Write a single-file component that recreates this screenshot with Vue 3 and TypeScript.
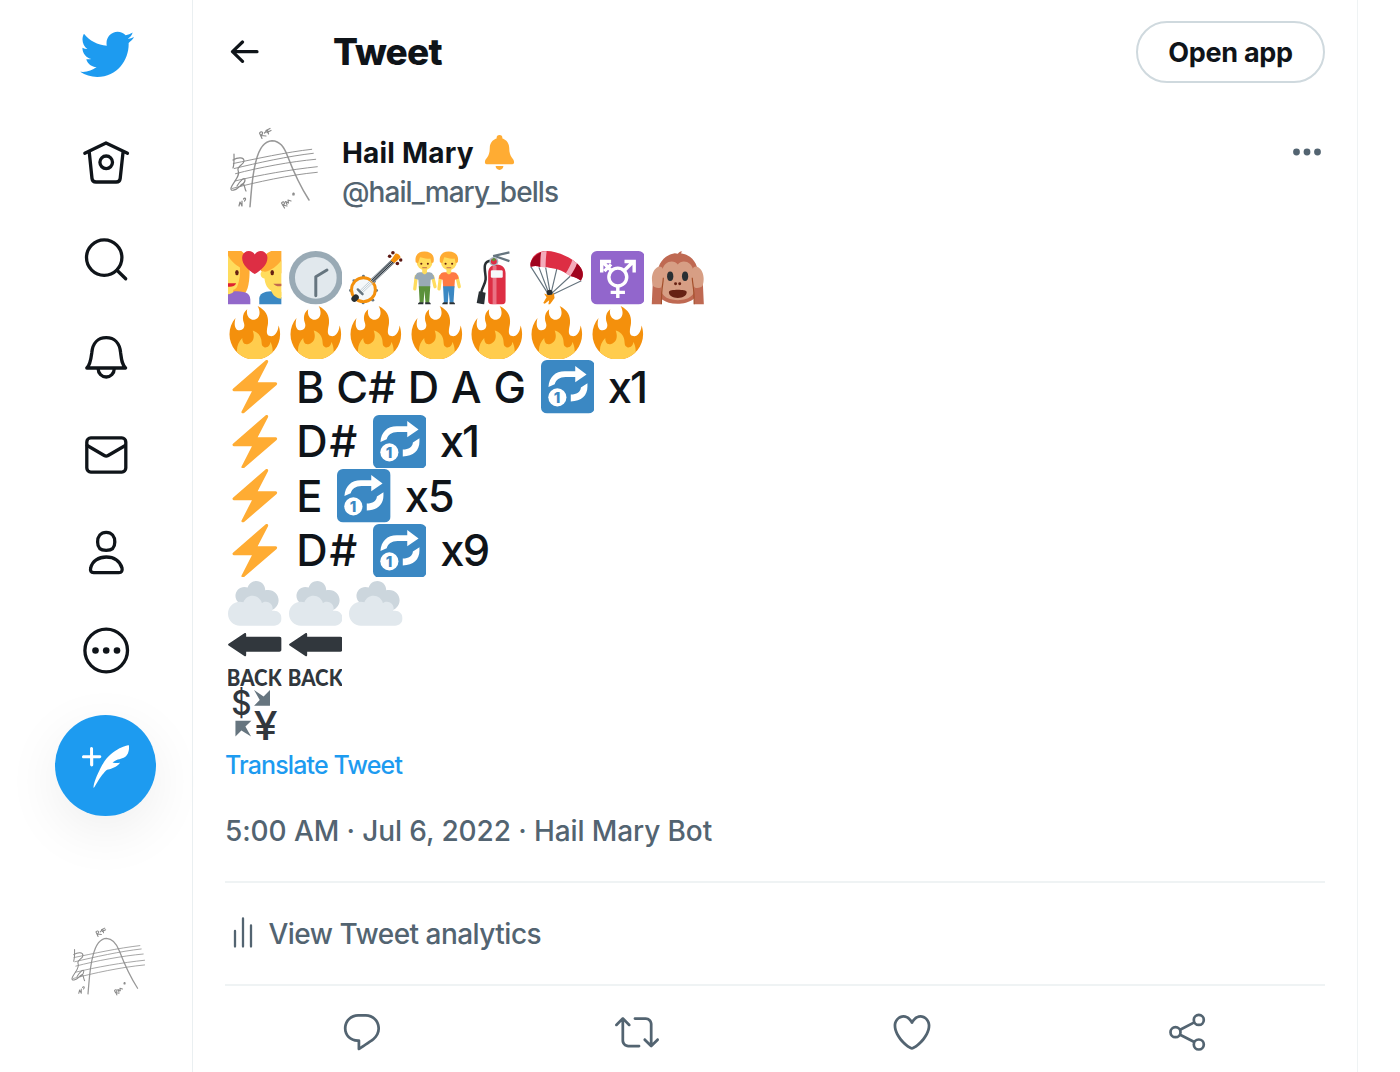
<script setup lang="ts">
type Segment =
  | { kind: 'emoji'; name: string }
  | { kind: 'text'; text: string; width: number; spacing: number; lead: number }

const emoji = (name: string): Segment => ({ kind: 'emoji', name })
const text = (value: string, width: number, spacing = 0, lead = 0): Segment => ({
  kind: 'text',
  text: value,
  width,
  spacing,
  lead,
})

const rows: Segment[][] = [
  ['couple', 'clock', 'banjo', 'men', 'extinguisher', 'parachute', 'trans', 'monkey'].map(emoji),
  Array.from({ length: 7 }, () => emoji('fire')),
  [emoji('zap'), text('B C# D A G', 252, 0.05, 7.3), emoji('repeat'), text('x1', 60, -2, 6.6)],
  [emoji('zap'), text('D#', 84, 2, 7.4), emoji('repeat'), text('x1', 60, -2, 6.6)],
  [emoji('zap'), text('E', 48.5, 0, 7.4), emoji('repeat'), text('x5', 60, -1.2, 7.1)],
  [emoji('zap'), text('D#', 84, 2, 7.4), emoji('repeat'), text('x9', 60, -1.8, 7.1)],
  [emoji('cloud'), emoji('cloud'), emoji('cloud')],
  [emoji('back'), emoji('back')],
  [emoji('currency')],
]

const nav = ['home', 'search', 'bell', 'mail', 'person', 'more']

const actions = [
  {
    name: 'reply',
    d: 'M14.046 2.242l-4.148-.01h-.002c-4.374 0-7.8 3.427-7.8 7.802 0 4.098 3.186 7.206 7.465 7.37v3.828c0 .108.044.286.12.403.142.225.384.347.632.347.138 0 .277-.038.402-.118.264-.168 6.473-4.14 8.088-5.506 1.902-1.61 3.04-3.97 3.043-6.312v-.017c-.006-4.367-3.43-7.787-7.8-7.788zm3.787 12.972c-1.134.96-4.862 3.405-6.772 4.643V16.67c0-.414-.335-.75-.75-.75h-.396c-3.66 0-6.318-2.476-6.318-5.886 0-3.534 2.768-6.302 6.3-6.302l4.147.01h.002c3.532 0 6.3 2.766 6.302 6.296-.003 1.91-.942 3.844-2.514 5.176z',
  },
  {
    name: 'retweet',
    d: 'M23.77 15.67c-.292-.293-.767-.293-1.06 0l-2.22 2.22V7.65c0-2.068-1.683-3.75-3.75-3.75h-5.85c-.414 0-.75.336-.75.75s.336.75.75.75h5.85c1.24 0 2.25 1.01 2.25 2.25v10.24l-2.22-2.22c-.293-.293-.768-.293-1.06 0s-.294.768 0 1.06l3.5 3.5c.145.147.337.22.53.22s.383-.072.53-.22l3.5-3.5c.294-.292.294-.767 0-1.06zm-10.66 3.28H7.26c-1.24 0-2.25-1.01-2.25-2.25V6.46l2.22 2.22c.148.147.34.22.532.22s.384-.073.53-.22c.293-.293.293-.768 0-1.06l-3.5-3.5c-.293-.294-.768-.294-1.06 0l-3.5 3.5c-.294.292-.294.767 0 1.06s.767.293 1.06 0l2.22-2.22V16.7c0 2.068 1.683 3.75 3.75 3.75h5.85c.414 0 .75-.336.75-.75s-.337-.75-.75-.75z',
  },
  {
    name: 'like',
    d: 'M12 21.638h-.014C9.403 21.59 1.95 14.856 1.95 8.478c0-3.064 2.525-5.754 5.403-5.754 2.29 0 3.83 1.58 4.646 2.73.814-1.148 2.354-2.73 4.645-2.73 2.88 0 5.404 2.69 5.404 5.755 0 6.376-7.454 13.11-10.037 13.157H12zM7.354 4.225c-2.08 0-3.903 1.988-3.903 4.255 0 5.74 7.034 11.596 8.55 11.658 1.518-.062 8.55-5.917 8.55-11.658 0-2.267-1.823-4.255-3.903-4.255-2.528 0-3.94 2.936-3.952 2.965-.23.562-1.156.562-1.387 0-.014-.03-1.425-2.965-3.954-2.965z',
  },
]
</script>

<template>
  <svg class="defs" aria-hidden="true">
    <defs>
      <symbol id="avatar" viewBox="0 0 97 97">
        <g fill="none" stroke="#8a8a8a" stroke-linecap="round" stroke-linejoin="round">
          <path stroke-width="1.5" stroke="#989898" d="M25 86.7C26.5 70 27 55 31 41C34 29 39 21 47 20.7C55 21 59 27 62.5 36C69 53 75 66 84 80" />
          <g stroke-width=".9">
            <path d="M8.3 43.5C30 39 62 32 86.7 29.3" />
            <path d="M9.3 48.5C32 43 64 36 88.3 33.3" />
            <path d="M10.5 53.7C34 47.5 66 41.5 90.7 39.3" />
            <path d="M10 61C34 55 66 49.5 92.3 46.7" />
            <path d="M7 68.5C32 62 64 55 92.3 52.3" />
          </g>
          <g stroke-width="1.2">
            <path d="M9 34c0 4 .5 9-1 14M8 40c5-3 11-3 11 1s-7 5-6 9M13 50c3 6-5 12-7 18-1 4 5 2 8-1M12 66c3-5 8-10 8-6s-8 9-4 5 3 3 5 6" />
            <path d="M37 18.500l-2.500-5.500c2-2.500 5-.5 1.500 2.500l5 .5M39.500 13l3-3 1 4M41 10.500l4-2M42 12.500l4-2" />
            <path d="M14 86l1-4 2 4 0-5M18.500 79c2-2 3 0 1 2" />
            <path d="M59.500 88l-3-5c2-3 5 1 1 2l4.500 1M62 84.500l-1.500-3 3 1.500-.5-3 3 1M68 75c-1-2 2-3 1 0" />
          </g>
        </g>
      </symbol>

      <symbol id="e-couple" viewBox="0 0 36 36">
        <path fill="#FFAC33" d="M0 0h9c4 3 5.500 8 5.500 13 0 6-.5 14-4.500 17H0z" />
        <path fill="#FFDC5D" d="M0 3c2 4 5 6 8 8 .5 5-.5 9-1.500 12-.6 2-2 3-3 3v3H0z" />
        <ellipse cx="6" cy="14.500" rx="1.200" ry="1.800" fill="#662113" />
        <path fill="#DF1F32" d="M0 21.700h5.500c-1 2.300-3 2.500-5.500 2.300z" />
        <path fill="#9268CA" d="M0 29c2 0 4-1.500 4-2 6 0 11 .5 11 5.500V36H0z" />
        <path fill="#FFAC33" d="M36 0h-7c-5 2-7.500 7-7 13l3 4 11-2z" />
        <path fill="#FFDC5D" d="M36 6c-3 4-7 7-11 8-1 0-1.500-1-2.500 0-1.500 1.500 0 4.500 2 4.500.5 4 2 7 4.500 8v4h7z" />
        <ellipse cx="29.700" cy="14.500" rx="1.200" ry="1.800" fill="#662113" />
        <path fill="#C1694F" d="M30.500 22H36v1.500c-2 .5-4 .2-5.500-1.500z" />
        <path fill="#3B88C3" d="M21 36v-4c0-3 3-5 8-5l7 4v5z" />
        <path fill="#FFDC5D" d="M29 26.500h4l3 1V32c-3 0-6-2-7-5.500z" />
        <path fill="#DD2E44" d="M26.500 4.500c0-2.600-2-4.500-4.500-4.500-1.700 0-3.200.9-4 2.300C17.200.9 15.700 0 14 0c-2.500 0-4.500 1.900-4.500 4.500 0 5 4.500 8.500 8.500 11 4-2.500 8.500-6 8.500-11z" />
      </symbol>

      <symbol id="e-clock" viewBox="0 0 36 36">
        <circle cx="18" cy="18" r="18" fill="#99AAB5" />
        <circle cx="18" cy="18" r="14" fill="#E1E8ED" />
        <path fill="none" stroke="#66757F" stroke-width="2" stroke-linecap="round" stroke-linejoin="round" d="M18 30V17.300l7.500-4.500" />
      </symbol>

      <symbol id="e-banjo" viewBox="0 0 36 36">
        <g fill="#66757F">
          <circle cx="9.700" cy="17" r="1" /><circle cx="3.300" cy="20" r="1" /><circle cx="1" cy="26.500" r="1" />
          <circle cx="17" cy="20.500" r="1" /><circle cx="18.500" cy="26.500" r="1" /><circle cx="16" cy="33" r="1" /><circle cx="9.500" cy="35" r="1" />
        </g>
        <circle cx="9.700" cy="26" r="8" fill="#F5F8FA" stroke="#F4900C" stroke-width="2" />
        <path stroke="#31373D" stroke-width="3" d="M15.500 20.300L30 6.500" />
        <path fill="none" stroke="#BCC8D0" stroke-width=".6" d="M6.500 27.500L29 5.700M8 29L31 7M7 28.500L30 6.300" />
        <path stroke="#66757F" stroke-width="1.600" stroke-linecap="round" d="M5.900 25.800l3.200 3.200" />
        <path stroke="#292F33" stroke-width="4" stroke-linecap="round" d="M3.600 32.200l1-1" />
        <g fill="#5C1914">
          <circle cx="27.300" cy="3.500" r="1.200" /><circle cx="29.500" cy="1.200" r="1.200" /><circle cx="34.800" cy="6" r="1.200" /><circle cx="32.500" cy="8.400" r="1.200" />
        </g>
        <path fill="#F4900C" d="M28 6.500l3-4.500c1-1 4 1 3.500 2.500L30.500 8z" />
      </symbol>

      <symbol id="e-men" viewBox="0 0 36 36">
        <g v-for="man in [{ x: 0, shirt: '#99AAB5', legs: '#5C913B' }, { x: 16.3, shirt: '#FF7A43', legs: '#3B88C3' }]" :key="man.x" :transform="`translate(${man.x} 0)`">
          <path fill="none" stroke="#FFDC5D" stroke-width="2.200" stroke-linecap="round" d="M4.200 17L3.200 25.500M15.200 17l1.600 7" />
          <path :fill="man.shirt" d="M6.500 14.200h6.500c2 0 3 2 3.500 4.300l-2.600.8-.4 5.200H6l-.4-5.200-2.600-.8c.5-2.300 1.500-4.300 3.500-4.300z" />
          <path :fill="man.legs" d="M5.900 23.700h7.700l-.7 11h-2.500l-.7-8-.6 8H6.500z" />
          <path fill="#292F33" d="M5.300 36c0-1.300.8-1.600 1.700-1.600h2V36zM10.200 36v-1.600h2.200c.9 0 1.600.3 1.600 1.600z" />
          <path fill="#FFDC5D" d="M8.200 11h3.200v3.200c-.8 1.800-2.400 1.800-3.200 0z" />
          <ellipse cx="9.800" cy="7.500" rx="5.300" ry="5.400" fill="#FFDC5D" />
          <path fill="#FFAC33" d="M3.800 7.500C3 2.500 6 .2 9.800.3c4.200 0 7 2.600 6 7.200l-1.400.8-.7-3.300c-3 .5-5.500-.5-7-.8L5.400 8.300z" />
          <circle cx="7.600" cy="8.600" r=".7" fill="#662113" /><circle cx="12" cy="8.600" r=".7" fill="#662113" />
          <path fill="none" stroke="#C1694F" stroke-width=".7" stroke-linecap="round" d="M8.500 11.200h2.600" />
        </g>
      </symbol>

      <symbol id="e-extinguisher" viewBox="0 0 36 36">
        <path fill="none" stroke="#292F33" stroke-width="1.700" d="M14.500 6.500C7 6.500 11 15 10.500 19S8.200 24 7.500 28" />
        <path fill="#292F33" d="M6 27l4.500 1-1 8-5-1z" />
        <path fill="#DD2E44" d="M12.200 15c0-3.500 2-6 5.800-6s5.900 2.500 5.900 6v18.500c0 1.700-1 2.500-2.700 2.500h-6.300c-1.700 0-2.700-.8-2.700-2.500z" />
        <path fill="#F4ABBA" opacity=".55" d="M15.200 10h2.600v26h-2.600z" />
        <rect x="14" y="13" width="8" height="5" rx=".8" fill="#F5F8FA" />
        <path fill="none" stroke="#66757F" stroke-width="1.500" d="M15.500 3.500L26.500.9M17 3.500l9.500 3.300" />
        <circle cx="16" cy="7" r="3" fill="#A8B6BF" /><circle cx="16" cy="7" r="2" fill="#DD2E44" /><path fill="#5C913B" d="M14.300 6l1.700 1 1.500-1.500-1.500-.9z" />
      </symbol>

      <symbol id="e-parachute" viewBox="0 0 36 36">
        <path fill="none" stroke="#66757F" stroke-width=".8" d="M.5 10.500l11.500 18M6 11l6.500 17M10.500 11l3 17M18 12l-4 17M27 17L14 29M34.500 20L14.500 29.500" />
        <path fill="#DD2E44" d="M1 6C3 1 9-1.200 17 .8s18 8 18.500 14c.2 2.500-.8 4.500-1.500 5-2-1.500-4-2.500-7-3-3.500-2.500-8-4.800-13-5.300-2-.8-5-1-7-.7-2-.8-4-.8-6.500-.3C-.1 9 .3 7.500 1 6z" />
        <path fill="#A0041E" d="M.5 10.500C-.1 8 1 4 7.500.8 7 3.500 7 7 7 10.800c-2-.9-4-.9-6.500-.3zM27 16.800c2-3 3.700-5.500 4.500-8.500 4.500 4 5 8.500 2.500 11.500-2-1.500-4-2.500-7-3z" />
        <path fill="#F4ABBA" d="M7.500.8c1-.5 2-.6 3.700-.7-.5 4-.7 7-.7 11.100-1.200-.4-2.500-.5-3.500-.4 0-3.800 0-7 .5-10zM24 14.900c2-3 3.500-6 4.500-9.100l3 2.500c-.8 3-2.500 5.500-4.500 8.500z" />
        <circle cx="13.200" cy="28" r="2" fill="#292F33" />
        <path fill="#F4900C" d="M9.500 28.500l3 1.200 2.500-.5 1-1.200.5 3.500-1.700 2.500-1.500 2h-1l.6-3-3 2.500-1-.5 2.200-4z" />
      </symbol>

      <symbol id="e-trans" viewBox="0 0 36 36">
        <rect width="36" height="36" rx="4" fill="#9266CC" />
        <g fill="none" stroke="#FFF" stroke-width="2.300">
          <circle cx="18" cy="17.500" r="6" />
          <path d="M18 23.500v8M13.200 27.800h9.600M22.200 13.300l6.300-6.300M13.800 13.300L7.500 7M22.500 7H29v7.500M13.500 7H7.200v7.500M9 13.500l4.500-4.500" />
        </g>
      </symbol>

      <symbol id="e-monkey" viewBox="0 0 36 36">
        <path fill="#BF6952" d="M18 1.800C19 .5 20 .2 21 .4l-1 1.100c7 1 11.500 6.500 11.500 13.500 0 3 1 5 1 8.500C32.500 31.500 26 35.500 17.700 35.500S3.500 31.500 3.500 23.500c0-3.500 1-5.500 1-8.500C4.500 8 9.500 2.500 16 1.500z" />
        <path fill="#D79E84" d="M18 9c2.500-3.500 10-2.500 10.500 5 .2 3 0 5 .8 8 1.700 7-3.300 11-11.300 11S5.200 29 6.700 22c.7-3 .5-5 .8-8C8 6.500 15.500 5.500 18 9z" />
        <ellipse cx="12.900" cy="17" rx="2.100" ry="3.200" fill="#292F33" /><ellipse cx="22.900" cy="17" rx="2.100" ry="3.200" fill="#292F33" />
        <circle cx="16.500" cy="22" r="1" fill="#662113" /><circle cx="19.300" cy="22" r="1" fill="#662113" />
        <path fill="#662113" d="M12 27.500c0-2 12-2 12 0 0 2.500-2.500 4-6 4s-6-1.500-6-4z" />
        <path fill="#BF6952" d="M1.200 21H7v15H.5zM34.800 21H29v15h6.500z" />
        <path fill="#D79E84" d="M4 11c3-2 5 1 4.500 5-.5 3-1 6-1.500 8-.5 1.500-5 1-5.800-1C-.2 18 1 13 4 11zM32 11c-3-2-5 1-4.500 5 .5 3 1 6 1.500 8 .5 1.500 5 1 5.800-1 1.400-5 .2-10-2.800-12z" />
        <path fill="none" stroke="#A34F2B" stroke-width=".8" d="M8.300 18C8 24 7 23 7 36M27.700 18c.3 6 1.300 5 1.300 18" />
      </symbol>

      <symbol id="e-fire" viewBox="0 0 36 36">
        <path fill="#F4900C" d="M35 19c0-2.062-.367-4.039-1.040-5.868-.46 5.389-3.333 8.157-6.335 6.868-2.812-1.208-.917-5.917-.777-8.164.236-3.809-.012-8.169-6.931-11.794 2.875 5.500.333 8.917-2.333 9.125-2.958.231-5.667-2.542-4.667-7.042-3.238 2.386-3.332 6.402-2.333 9 1.042 2.708-.042 4.958-2.583 5.208-2.840.28-4.418-3.041-2.963-8.333C2.520 10.965 1 14.805 1 19c0 9.389 7.611 17 17 17s17-7.611 17-17z" />
        <path fill="#FFCC4D" d="M28.394 23.999c.148 3.084-2.561 4.293-4.019 3.709-2.106-.843-1.541-2.291-2.083-5.291s-2.625-5.083-5.708-6c2.250 6.333-1.247 8.667-3.080 9.084-1.872.426-3.753-.001-3.968-4.007C7.352 23.668 6 26.676 6 30c0 .368.023.73.055 1.090C9.125 34.124 13.342 36 18 36s8.875-1.876 11.945-4.910c.032-.36.055-.722.055-1.090 0-2.187-.584-4.236-1.606-6.001z" />
      </symbol>

      <symbol id="e-zap" viewBox="0 0 36 36">
        <path fill="#FFAC33" d="M32.938 15.651C32.792 15.260 32.418 15 32 15H19.925L26.890 1.458c.219-.426.106-.947-.271-1.243C26.437.071 26.218 0 26 0c-.233 0-.466.082-.653.243L18 6.588 3.347 19.243c-.316.273-.43.714-.284 1.105S3.582 21 4 21h12.075L9.110 34.542c-.219.426-.106.947.271 1.243.182.144.401.215.619.215.233 0 .466-.082.653-.243L18 29.412l14.653-12.655c.317-.273.43-.714.285-1.106z" />
      </symbol>

      <symbol id="e-repeat" viewBox="0 0 36 36">
        <rect width="36" height="36" rx="4" fill="#3B88C3" />
        <path fill="#FFF" d="M5 18.200C5.500 11.500 9.500 7.600 16 7.600h7V4.100l7.600 5.600-7.600 5.200v-3.400h-6.500C12.500 11.500 10 13.500 9.200 16.300zM31.200 15.600v2.200c0 6-4 10-11.200 10v-4.600c4 0 6.500-1.600 6.800-4.700z" />
        <circle cx="11" cy="25.100" r="6.100" fill="#FFF" />
        <text x="10.700" y="28.800" class="repeat-digit" text-anchor="middle">1</text>
      </symbol>

      <symbol id="e-cloud" viewBox="0 0 36 36">
        <path fill="#CCD6DD" d="M27 8c-.701 0-1.377.106-2.015.298.005-.1.015-.197.015-.298 0-3.313-2.687-6-6-6-2.769 0-5.093 1.878-5.785 4.427C12.529 6.154 11.783 6 11 6c-3.314 0-6 2.686-6 6 0 3.312 2.686 6 6 6 2.769 0 5.093-1.878 5.785-4.428.686.273 1.432.428 2.215.428.375 0 .74-.039 1.096-.104-.058.36-.096.727-.096 1.104 0 3.865 3.135 7 7 7s7-3.135 7-7c0-3.866-3.135-7-7-7z" />
        <path fill="#E1E8ED" d="M31 22c-.467 0-.91.085-1.339.204.216-.526.339-1.100.339-1.704 0-2.485-2.015-4.500-4.500-4.500-1.019 0-1.947.351-2.701.921C22.093 14.096 19.544 12 16.500 12c-2.838 0-5.245 1.822-6.131 4.357C9.621 16.125 8.825 16 8 16c-4.418 0-8 3.582-8 8 0 4.419 3.582 8 8 8h23c2.762 0 5-2.238 5-5s-2.238-5-5-5z" />
      </symbol>

      <symbol id="e-back" viewBox="0 0 36 36">
        <path fill="#31373D" d="M.4 7.200L11 .2c.7-.4 1.200 0 1.200.7v1.600h22.300c.9 0 1.500.6 1.500 1.500v7.100c0 .9-.6 1.500-1.500 1.500H12.200v2.200c0 .7-.5 1.100-1.200.7L.4 8.400c-.5-.4-.5-.8 0-1.200z" />
        <text x="-.8" y="35.300" class="back-word" textLength="37" lengthAdjust="spacingAndGlyphs">BACK</text>
      </symbol>

      <symbol id="e-currency" viewBox="0 0 36 36">
        <path fill="#66757F" d="M28.200 12.600V2l-4.300 4.300L17.500 2l3.800 6.800-3.800 3.800zM5 22.600v10.600l4-4 6.500 4-3.800-6.600 4-4z" />
        <text x="2.200" y="18.500" class="money" textLength="13.600" lengthAdjust="spacingAndGlyphs">$</text>
        <text x="17.300" y="35.500" class="money yen" textLength="16" lengthAdjust="spacingAndGlyphs">¥</text>
      </symbol>

      <symbol id="e-bell" viewBox="0 0 36 36">
        <path fill="#FFAC33" d="M28 13c0 11 5 10 5 15 0 0 0 2-2 2H5c-2 0-2-2-2-2 0-5 5-4 5-15C8 7.478 12.477 3 18 3s10 4.478 10 10z" />
        <circle cx="18" cy="3" r="3" fill="#FFAC33" />
        <path fill="#FFAC33" d="M18 36c2.209 0 4-1.791 4-4h-8c0 2.209 1.791 4 4 4z" />
      </symbol>
    </defs>
  </svg>

  <div class="page">
    <aside class="sidebar">
      <svg class="logo" viewBox="0 0 24 24" preserveAspectRatio="none">
        <path fill="#1d9bf0" d="M23.643 4.937c-.835.37-1.732.62-2.675.733.962-.576 1.700-1.490 2.048-2.578-.9.534-1.897.922-2.958 1.130-.85-.904-2.060-1.470-3.400-1.470-2.572 0-4.658 2.086-4.658 4.660 0 .364.042.718.120 1.060-3.873-.195-7.304-2.050-9.602-4.868-.4.690-.63 1.490-.63 2.342 0 1.616.823 3.043 2.072 3.878-.764-.025-1.482-.234-2.110-.583v.060c0 2.257 1.605 4.140 3.737 4.568-.392.106-.803.162-1.227.162-.3 0-.593-.028-.877-.082.593 1.850 2.313 3.198 4.352 3.234-1.595 1.250-3.604 1.995-5.786 1.995-.376 0-.747-.022-1.112-.065 2.062 1.323 4.510 2.093 7.140 2.093 8.570 0 13.255-7.098 13.255-13.254 0-.2-.005-.402-.014-.602.910-.658 1.700-1.477 2.323-2.410z" />
      </svg>

      <nav class="nav">
        <svg v-for="item in nav" :key="item" class="nav-icon" viewBox="0 0 60 60">
          <template v-if="item === 'home'">
            <path d="M8.800 21.300L30 10.900l21.500 10.400M13.300 20.500l2.700 26Q16.400 50 20 50h20.200Q43.800 50 44.200 46.500l2.800-26" />
            <circle cx="30.200" cy="30.300" r="6.300" />
          </template>
          <template v-else-if="item === 'search'">
            <circle cx="28.200" cy="27.600" r="17.700" />
            <path d="M41 40.300l8.700 8.500" />
          </template>
          <template v-else-if="item === 'bell'">
            <path d="M10.800 41C14.500 37.500 15 32 15.800 25.500 16.700 16 22 10.700 30.200 10.700s13.500 5.300 14.400 14.800c.8 6.500 1.100 12 5 15.500z" />
            <path stroke-linecap="butt" d="M22.200 42a8 8 0 0 0 16 0" />
          </template>
          <template v-else-if="item === 'mail'">
            <rect x="10.800" y="12.900" width="39" height="34.200" rx="4" />
            <path d="M11.200 20.500l17.100 10q1.900 1.100 3.800 0l17.200-10" />
          </template>
          <template v-else-if="item === 'person'">
            <path d="M30.200 9.300C35.700 9.300 38.800 13.500 38.800 19 38.800 25 36.200 27.400 30.200 27.400S21.600 25 21.600 19C21.600 13.500 24.700 9.300 30.200 9.300z" />
            <path d="M17.700 49.700h25.100Q47 49.500 46 45C44 38 38 34 30.300 34S16.200 38 14.700 45Q13.600 49.500 17.700 49.700z" />
          </template>
          <template v-else>
            <circle cx="30.200" cy="29.500" r="21.300" />
            <g fill="#0f1419" stroke="none">
              <circle cx="19.500" cy="29.500" r="3.300" /><circle cx="30.200" cy="29.500" r="3.300" /><circle cx="41" cy="29.500" r="3.300" />
            </g>
          </template>
        </svg>
      </nav>

      <button class="compose" aria-label="Tweet">
        <svg viewBox="0 0 24 24" width="47.3" height="47.3">
          <path fill="#fff" d="M8.800 7.200H5.600V3.900c0-.4-.3-.8-.8-.8s-.7.4-.7.8v3.300H.8c-.4 0-.8.3-.8.8s.3.8.8.8h3.300v3.300c0 .4.3.8.8.8s.8-.3.8-.8V8.700H9c.4 0 .8-.3.8-.8s-.5-.7-1-.7zm15-4.900v-.1h-.1c-.1 0-9.200 1.200-14.400 11.700-3.800 7.600-3.600 9.900-3.300 9.900.3.1 3.400-6.500 6.700-9.200 5.200-1.100 6.600-3.600 6.600-3.600s-1.500.2-2.100.2c-.8 0-1.400-.2-1.700-.3 1.300-1.200 2.400-1.500 3.500-1.700.9-.2 1.800-.4 3-1.200 2.200-1.600 1.900-5.500 1.800-5.700z" />
        </svg>
      </button>

      <svg class="account"><use href="#avatar" /></svg>
    </aside>

    <main class="column">
      <header class="header">
        <svg class="arrow" viewBox="0 0 30 26">
          <path d="M27 12.700H3M12.500 3L2.500 12.700l10 9.700" />
        </svg>
        <h1>Tweet</h1>
        <button class="open-app">Open app</button>
      </header>

      <article class="tweet">
        <div class="author">
          <svg class="author-avatar"><use href="#avatar" /></svg>
          <div class="author-names">
            <div class="name"><span>Hail Mary</span><svg><use href="#e-bell" /></svg></div>
            <div class="handle">@hail_mary_bells</div>
          </div>
          <svg class="dots" viewBox="0 0 30 10">
            <circle cx="4.500" cy="5" r="3.400" /><circle cx="15" cy="5" r="3.400" /><circle cx="25.500" cy="5" r="3.400" />
          </svg>
        </div>

        <div class="body">
          <div v-for="(row, r) in rows" :key="r" class="row">
            <template v-for="(seg, s) in row" :key="s">
              <svg v-if="seg.kind === 'emoji'" class="emoji"><use :href="`#e-${seg.name}`" /></svg>
              <span v-else class="run" :style="{ width: `${seg.width}px`, letterSpacing: `${seg.spacing}px`, paddingLeft: `${seg.lead}px` }">{{ seg.text }}</span>
            </template>
          </div>
        </div>

        <a class="translate">Translate Tweet</a>
        <div class="date">5:00 AM · Jul 6, 2022 · Hail Mary Bot</div>

        <div class="analytics">
          <svg viewBox="0 0 24 34"><path d="M4 15v15.500M12 2.500v28M20 9.500v21" /></svg>
          <span>View Tweet analytics</span>
        </div>

        <div class="actions">
          <div v-for="a in actions" :key="a.name" class="action">
            <svg viewBox="0 0 24 24"><path :d="a.d" /></svg>
          </div>
          <div class="action">
            <svg class="share" viewBox="0 0 44 44">
              <circle cx="10.500" cy="22.200" r="5" /><circle cx="33.800" cy="9.900" r="5" /><circle cx="33.800" cy="34.500" r="5" />
              <path d="M15.100 19.700l14.200-7.300M15.100 24.700l14.200 7.300" />
            </svg>
          </div>
        </div>
      </article>
    </main>
  </div>
</template>

<style>
body {
  margin: 0;
  background: #fff;
  overflow: hidden;
}
</style>

<style scoped>
.page {
  display: flex;
  width: 1400px;
  height: 1072px;
  overflow: hidden;
  background: #fff;
  color: #0f1419;
  font-family: Inter, "Liberation Sans", sans-serif;
  font-weight: 450;
  white-space: nowrap;
}
.defs {
  position: absolute;
  width: 0;
  height: 0;
}
button {
  border: 0;
  padding: 0;
  font-family: inherit;
}

.sidebar {
  flex: none;
  width: 192px;
  display: flex;
  flex-direction: column;
  align-items: center;
  box-sizing: border-box;
  padding-left: 20px;
}
.logo {
  flex: none;
  width: 57px;
  height: 58.8px;
  margin-top: 25px;
}
.nav {
  display: flex;
  flex-direction: column;
  gap: 37.75px;
  margin-top: 48.2px;
}
.nav-icon {
  display: block;
  width: 60px;
  height: 60px;
  fill: none;
  stroke: #0f1419;
  stroke-width: 3.3;
  stroke-linecap: round;
  stroke-linejoin: round;
}
.compose {
  flex: none;
  display: flex;
  align-items: center;
  justify-content: center;
  width: 101px;
  height: 101px;
  margin-top: 33.8px;
  margin-right: 1px;
  border-radius: 50%;
  background: #1d9bf0;
  box-shadow: 0 16px 56px rgba(0, 0, 0, 0.07);
}
.compose svg {
  margin-left: 1px;
}
.account {
  flex: none;
  width: 81.5px;
  height: 81.5px;
  margin-top: 105.5px;
  margin-left: 3px;
}

.column {
  flex: none;
  width: 1166px;
  box-sizing: border-box;
  border-left: 1.5px solid #eaeff1;
  border-right: 1.5px solid #eff3f4;
  padding: 0 32px;
}
.header {
  display: flex;
  align-items: center;
  height: 103px;
}
.arrow {
  width: 30px;
  height: 26px;
  margin-left: 5px;
  fill: none;
  stroke: #0f1419;
  stroke-width: 3.2;
  stroke-linecap: round;
  stroke-linejoin: round;
}
.header h1 {
  margin: 0 0 0 73px;
  font-size: 37px;
  font-weight: 800;
  letter-spacing: -0.8px;
}
.open-app {
  box-sizing: border-box;
  width: 189px;
  height: 62px;
  margin-left: auto;
  border: 2px solid #cfd9de;
  border-radius: 31px;
  padding-top: 1px;
  background: #fff;
  color: #0f1419;
  font-size: 27px;
  font-weight: 700;
  letter-spacing: -0.3px;
}

.author {
  display: flex;
  height: 97px;
  margin-top: 17px;
}
.author-avatar {
  flex: none;
  width: 97px;
  height: 97px;
}
.author-names {
  margin: 14px 0 0 20px;
}
.name,
.handle {
  height: 39px;
  line-height: 39px;
  font-size: 28px;
}
.name {
  display: flex;
  font-weight: 700;
  letter-spacing: 0.2px;
}
.name svg {
  width: 35px;
  height: 35px;
  margin: 1px 0 0 8.5px;
}
.handle {
  color: #536471;
  letter-spacing: -0.95px;
}
.dots {
  width: 30px;
  height: 10px;
  margin: 27px 3px 0 auto;
  fill: #536471;
}

.body {
  margin-top: 33.8px;
  padding-left: 3.4px;
}
.row {
  display: flex;
  align-items: center;
  gap: 6.8px;
  height: 54.5px;
}
.emoji {
  flex: none;
  width: 53.6px;
  height: 53.6px;
}
.run {
  flex: none;
  box-sizing: border-box;
  margin-right: -6.8px;
  font-size: 43.5px;
  line-height: 54.5px;
}
.repeat-digit {
  fill: #3b88c3;
  font: 800 10px Inter, sans-serif;
}
.back-word {
  fill: #31373d;
  font: 900 14.800px Lato, sans-serif;
}
.money {
  fill: #31373d;
  font: 450 23px Inter, sans-serif;
}
.yen {
  font-size: 27px;
}

.translate {
  display: block;
  height: 34px;
  margin-top: 6.7px;
  color: #1d9bf0;
  font-size: 25px;
  line-height: 34px;
  letter-spacing: -0.88px;
}
.date {
  height: 38px;
  margin-top: 30px;
  padding-bottom: 30.8px;
  border-bottom: 2px solid #eff3f4;
  color: #536471;
  font-size: 28px;
  line-height: 38px;
  letter-spacing: -0.1px;
}
.analytics {
  display: flex;
  align-items: center;
  height: 101px;
  border-bottom: 2px solid #eff3f4;
  color: #536471;
  font-size: 28px;
  letter-spacing: -0.52px;
}
.analytics span {
  padding-top: 2px;
}
.analytics svg {
  width: 24px;
  height: 34px;
  margin: 0 14px 0 5.5px;
  fill: none;
  stroke: #536471;
  stroke-width: 2.3;
  stroke-linecap: round;
}
.actions {
  display: flex;
  height: 92px;
  margin-left: -0.5px;
  margin-right: 0.5px;
}
.action {
  flex: 1;
  display: flex;
  align-items: center;
  justify-content: center;
}
.action svg {
  width: 44px;
  height: 44px;
  fill: #536471;
}
.action .share {
  fill: none;
  stroke: #536471;
  stroke-width: 2.7;
}
</style>
